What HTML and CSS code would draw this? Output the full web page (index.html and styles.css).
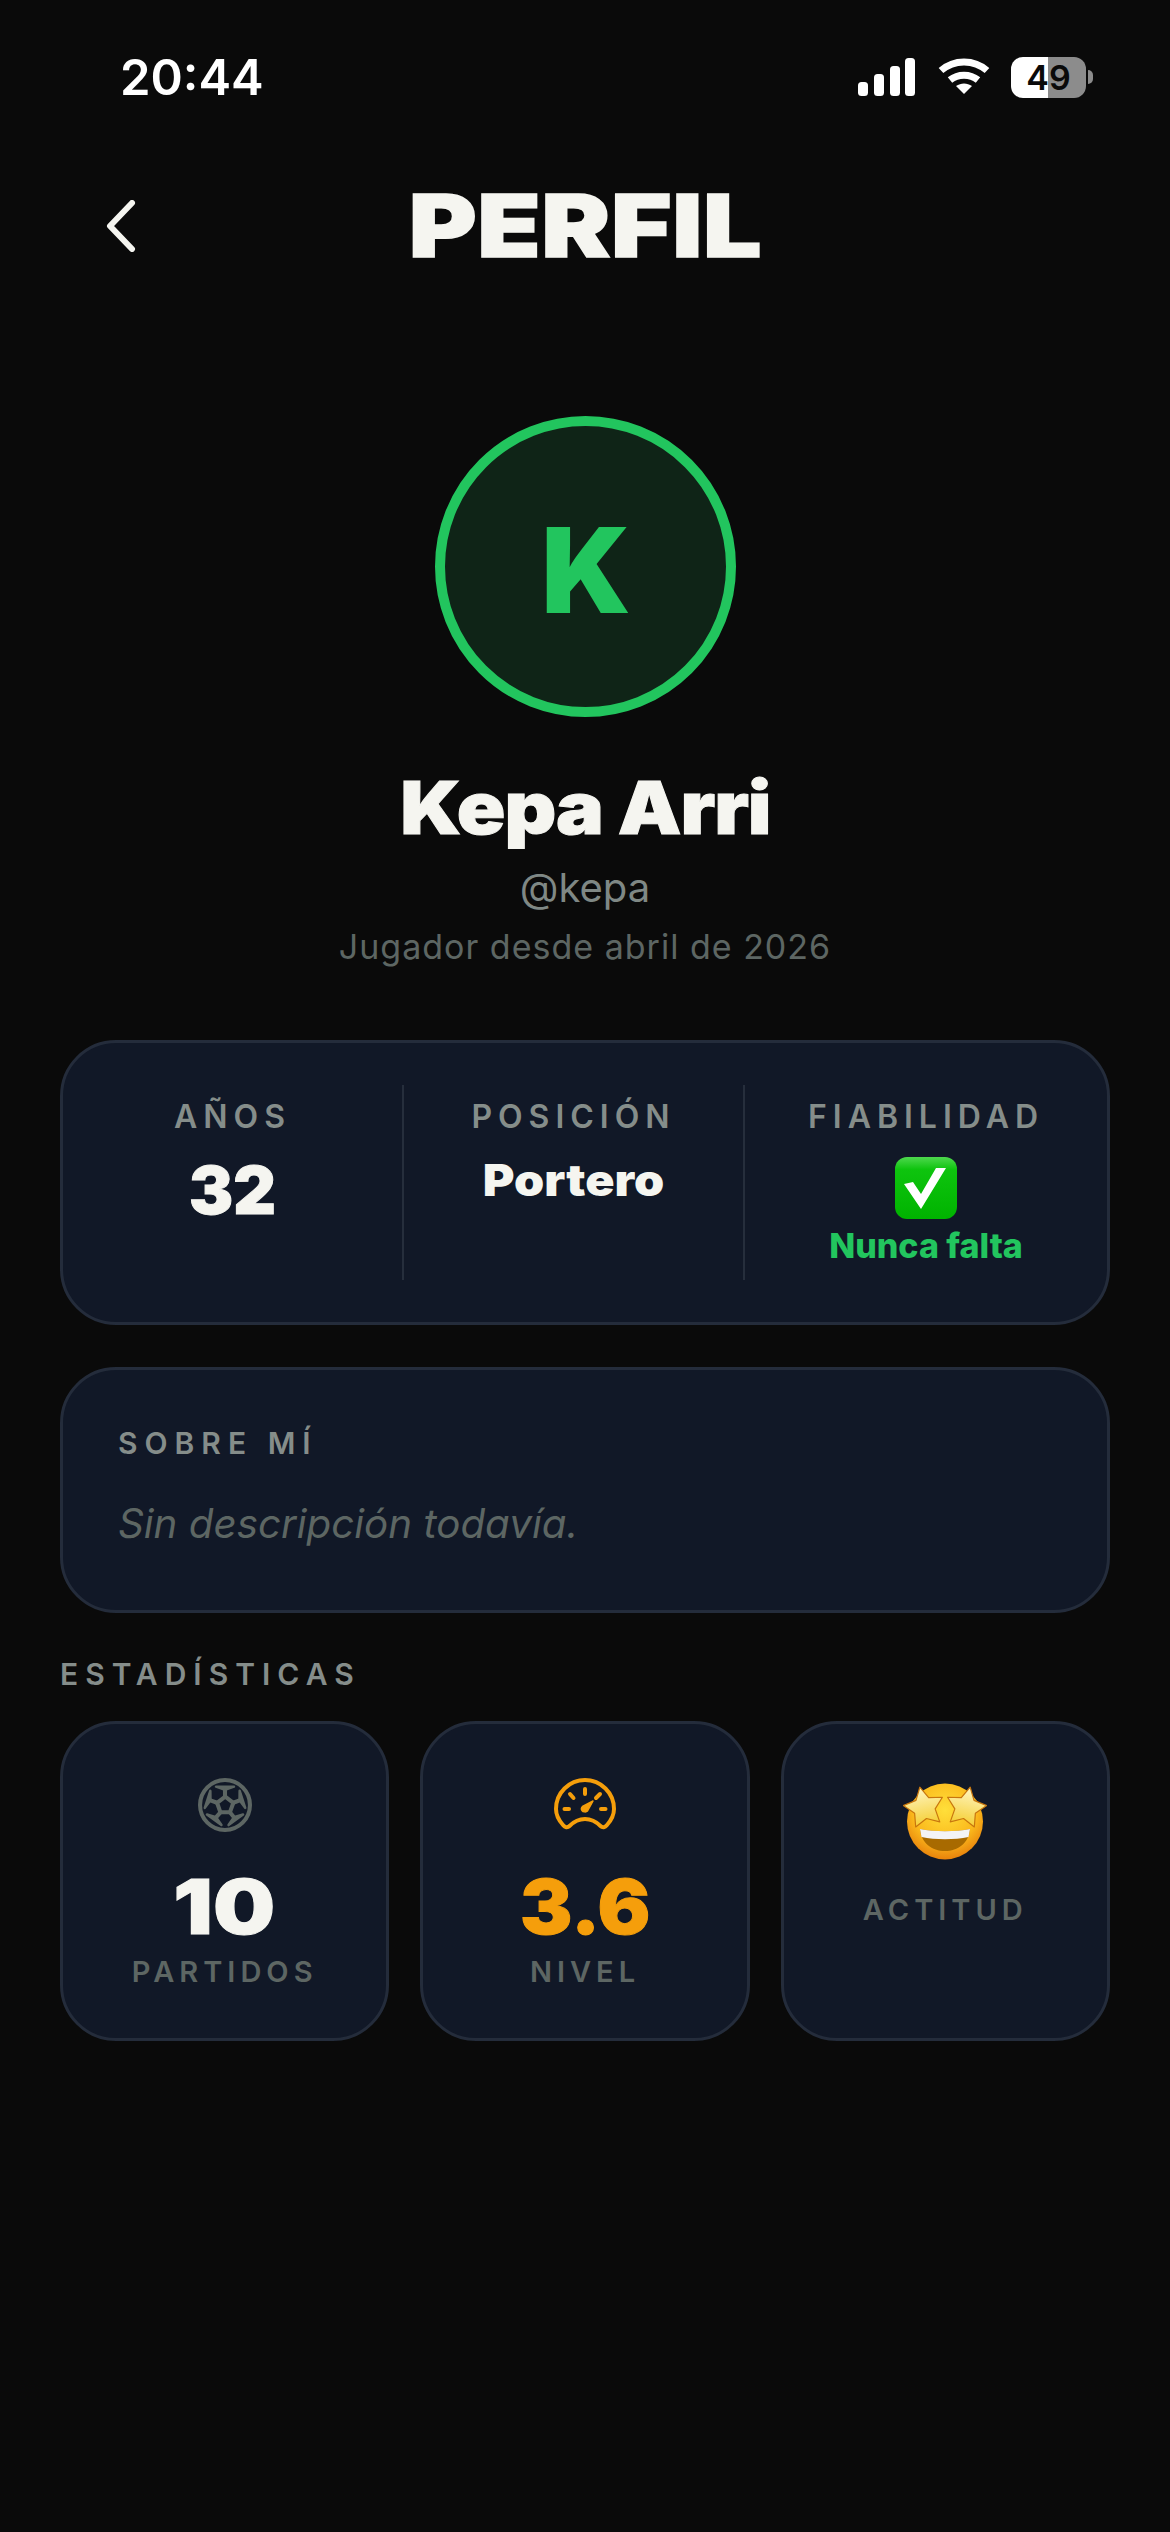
FILE: index.html

```html
<!DOCTYPE html>
<html lang="es">
<head>
  <meta charset="UTF-8">
  <meta name="viewport" content="width=device-width, initial-scale=1.0">
  <title>Perfil</title>
  <link rel="stylesheet" href="styles.css">
</head>
<body>
  <div class="status-bar">
    <span class="time">20:44</span>
    <div class="status-icons">
      <svg class="signal" width="58" height="38" viewBox="0 0 58 38" fill="#fff">
        <rect x="0" y="24" width="10" height="14" rx="3.5"/>
        <rect x="16" y="16" width="10" height="22" rx="3.5"/>
        <rect x="32" y="8" width="10" height="30" rx="3.5"/>
        <rect x="47" y="0" width="10" height="38" rx="3.5"/>
      </svg>
      <svg class="wifi" width="52" height="38" viewBox="0 0 52 38" fill="none" stroke="#fff" stroke-width="7">
        <path d="M3 12.5C16 1 36 1 49 12.5"/>
        <path d="M12 22c8-6.500 20-6.500 28 0"/>
        <path d="M18 28l8 8 8-8c-5-3.500-11-3.500-16 0z" fill="#fff" stroke="none"/>
      </svg>
      <div class="battery"><span>49</span></div>
      <span class="battery-nub"></span>
    </div>
  </div>

  <header class="top-bar">
    <svg class="back" width="30" height="52" viewBox="0 0 30 52" fill="none" stroke="#f5f5f0" stroke-width="6" stroke-linecap="round" stroke-linejoin="round">
      <path d="M26 3L4 26l22 23"/>
    </svg>
    <h1>PERFIL</h1>
  </header>

  <section class="profile">
    <div class="avatar">K</div>
    <h2 class="name">Kepa Arri</h2>
    <p class="handle">@kepa</p>
    <p class="since">Jugador desde abril de 2026</p>
  </section>

  <section class="card info-card">
    <div class="info-col">
      <span class="label">AÑOS</span>
      <span class="info-num">32</span>
    </div>
    <div class="info-col">
      <span class="label">POSICIÓN</span>
      <span class="info-text">Portero</span>
    </div>
    <div class="info-col">
      <span class="label">FIABILIDAD</span>
      <svg class="check" width="64" height="64" viewBox="0 0 64 64">
        <defs>
          <linearGradient id="checkBg" x1="0" y1="0" x2="0" y2="1">
            <stop offset="0" stop-color="#4ed84e"/>
            <stop offset="0.2" stop-color="#0ec40e"/>
            <stop offset="1" stop-color="#00b300"/>
          </linearGradient>
        </defs>
        <rect x="1" y="1" width="62" height="62" rx="12" fill="url(#checkBg)"/>
        <path d="M10 28l9-2 8 12L42 12h10L27 53z" fill="#fff"/>
      </svg>
      <span class="reliable">Nunca falta</span>
    </div>
  </section>

  <section class="card about-card">
    <h3 class="about-title">SOBRE MÍ</h3>
    <p class="about-text">Sin descripción todavía.</p>
  </section>

  <h3 class="section-title">ESTADÍSTICAS</h3>
  <section class="stats">
    <div class="card stat">
      <svg class="stat-icon" width="54" height="54" viewBox="0 0 53 53" fill="none" stroke="#5d6663" stroke-width="4" stroke-linejoin="round" stroke-linecap="round">
        <circle cx="26.500" cy="26.500" r="24.500"/>
        <path d="M26.700 18.300l8 6-3.400 9.400H22l-3.300-9.400z"/>
        <path d="M26.500 18V11.500M34.700 24.300l6.100-2.400M31.300 33.700l4 4.900M22 33.700l-4.300 4.900M18.700 24.300l-6.500-2.400"/>
        <path d="M26.500 11.500l-8.800-3h17.600zM40.800 21.900l.1-9.300 5.400 16.700zM35.300 38.600l8.900-2.700L30 46.200zM17.700 38.600l5.300 7.600-14.200-10.300zM12.200 21.900l-5.500 7.400 5.400-16.700z" fill="#5d6663" stroke-width="2.500"/>
      </svg>
      <span class="stat-num wide">10</span>
      <span class="stat-label">PARTIDOS</span>
    </div>
    <div class="card stat">
      <svg class="stat-icon" width="62" height="54" viewBox="0 0 62 54" fill="none" stroke="#f59e0b" stroke-width="4" stroke-linecap="round" stroke-linejoin="round">
        <path d="M9 47C4.500 42 2 37 2 31a29 29 0 0 1 58 0c0 6-2.500 11-7 16-2 2.500-4.500 3-6.500 1-4.500-4.500-9.500-7-15.500-7s-11 2.500-15.500 7c-2 2-4.500 1.500-6.500-1z"/>
        <path d="M31 11v5M10.500 31H15M47 31h4.500M16 16l3.500 4M46 16l-4 4"/>
        <path d="M39 23l-5.500 10c-1.500 1.500-4.500 1-5.500-.500s-.500-3 .500-4z" fill="#f59e0b" stroke-width="1.500"/>
      </svg>
      <span class="stat-num orange">3.6</span>
      <span class="stat-label">NIVEL</span>
    </div>
    <div class="card stat">
      <svg class="stat-emoji" width="84" height="77" viewBox="0 0 84 77">
        <defs>
          <radialGradient id="face" cx="0.5" cy="0.35" r="0.65">
            <stop offset="0" stop-color="#ffdf3a"/>
            <stop offset="0.65" stop-color="#fbb91c"/>
            <stop offset="1" stop-color="#e8820c"/>
          </radialGradient>
          <linearGradient id="star" x1="0" y1="0" x2="0" y2="1">
            <stop offset="0" stop-color="#fff6c4"/>
            <stop offset="1" stop-color="#f5cf35"/>
          </linearGradient>
        </defs>
        <circle cx="42" cy="38.500" r="38" fill="url(#face)"/>
        <path d="M17 46c14 3 36 3 50 0-1 14-12 22-25 22S18 60 17 46z" fill="#a86a00"/>
        <path d="M17 46c14 3 36 3 50 0l-1.500 8c-14 3-33 3-47 0z" fill="#f4f4f6"/>
        <path d="M20 3l6.500 12.100L40 17.500l-9.500 9.900L32.300 41 20 35 7.700 41l1.800-13.600L0 17.500l13.500-2.400z" fill="url(#star)" stroke="#c8760e" stroke-width="1.200" stroke-linejoin="round" transform="rotate(-12 20 24) translate(1 1)"/>
        <path d="M64 3l6.500 12.100L84 17.500l-9.500 9.900L76.300 41 64 35l-12.300 6 1.800-13.600L44 17.500l13.500-2.400z" fill="url(#star)" stroke="#c8760e" stroke-width="1.200" stroke-linejoin="round" transform="rotate(12 64 24) translate(-1 1)"/>
      </svg>
      <span class="stat-label attitude">ACTITUD</span>
    </div>
  </section>
</body>
</html>
```

FILE: styles.css

```css
body {
  margin: 0;
  background-color: #0a0a0a;
  color: #f5f5f0;
  font-family: "Inter", "Liberation Sans", sans-serif;
  height: 2532px;
  overflow: hidden;
}
.status-bar {
  display: flex;
  justify-content: space-between;
  align-items: center;
  height: 42px;
  padding: 56px 77px 0 120px;
}
.time {
  font-size: 49px;
  font-weight: 600;
  color: #fff;
}
.status-icons {
  display: flex;
  align-items: center;
}
.wifi {
  margin-left: 22px;
}
.battery {
  width: 75px;
  height: 41px;
  margin-left: 21px;
  border-radius: 12px;
  background: linear-gradient(to right, #fff 49%, #8c8c8c 49%);
  color: #0a0a0a;
  font-size: 34px;
  font-weight: 600;
  line-height: 41px;
  text-align: center;
}
.battery-nub {
  width: 5px;
  height: 14px;
  margin-left: 2px;
  border-radius: 0 7px 7px 0;
  background-color: #8c8c8c;
}
.top-bar {
  display: grid;
  grid-template-columns: 1fr auto 1fr;
  align-items: center;
  height: 100px;
  margin-top: 78px;
  padding: 0 106px;
}
.top-bar h1 {
  grid-column: 2;
  grid-row: 1;
  margin: 0;
  font-size: 87px;
  font-weight: 900;
  line-height: 100px;
  letter-spacing: 0.5px;
  -webkit-text-stroke: 1.5px #f5f5f0;
  transform: scaleX(1.19);
}
.back {
  grid-column: 1;
  grid-row: 1;
}
.profile {
  display: flex;
  flex-direction: column;
  align-items: center;
  margin-top: 140px;
}
.avatar {
  display: flex;
  align-items: center;
  justify-content: center;
  box-sizing: border-box;
  width: 301px;
  height: 301px;
  padding: 6px 0 0 2px;
  border: 10px solid #22c55e;
  border-radius: 50%;
  background-color: #0f2417;
  color: #22c55e;
  font-size: 118px;
  font-weight: 900;
}
.name {
  margin: 47px 0 0;
  font-size: 73px;
  font-weight: 900;
  line-height: 88px;
  letter-spacing: -1px;
  -webkit-text-stroke: 1px #f5f5f0;
  transform: scaleX(1.1);
}
.handle {
  margin: 12px 0 0;
  color: #7f8885;
  font-size: 40px;
  line-height: 48px;
}
.since {
  margin: 12px 0 0;
  color: #5d6663;
  font-size: 34px;
  line-height: 46px;
  letter-spacing: 1px;
}
.card {
  box-sizing: border-box;
  border: 3px solid #242c3b;
  border-radius: 56px;
  background-color: #111827;
}
.info-card {
  display: grid;
  grid-template-columns: 339px 341px 1fr;
  height: 285px;
  margin: 70px 60px 0;
  padding: 42px 0;
}
.info-col {
  display: flex;
  flex-direction: column;
  align-items: center;
  padding-top: 13px;
  border-left: 2px solid #262e3c;
}
.info-col:first-child {
  border-left: 0;
}
.label {
  color: #858d8a;
  font-size: 32px;
  font-weight: 600;
  line-height: 38px;
  letter-spacing: 6px;
}
.info-num {
  margin-top: 18px;
  font-size: 66px;
  font-weight: 900;
  line-height: 72px;
  -webkit-text-stroke: 1px #f5f5f0;
}
.info-text {
  margin-top: 18px;
  font-size: 44px;
  font-weight: 900;
  line-height: 52px;
  transform: scaleX(1.1);
}
.check {
  margin-top: 20px;
}
.reliable {
  margin-top: 6px;
  color: #22c55e;
  font-size: 34px;
  font-weight: 800;
  line-height: 40px;
}
.about-card {
  height: 246px;
  margin: 42px 60px 0;
  padding: 55px 55px 0;
}
.about-title {
  margin: 0;
  color: #858d8a;
  font-size: 30px;
  font-weight: 600;
  line-height: 36px;
  letter-spacing: 7px;
}
.about-text {
  margin: 39px 0 0;
  color: #5d6663;
  font-size: 40.3px;
  font-style: italic;
  line-height: 48px;
}
.section-title {
  margin: 43px 60px 0;
  color: #858d8a;
  font-size: 30px;
  font-weight: 600;
  line-height: 36px;
  letter-spacing: 7px;
}
.stats {
  display: grid;
  grid-template-columns: repeat(3, 1fr);
  gap: 31px;
  margin: 29px 60px 0;
}
.stat {
  display: flex;
  flex-direction: column;
  align-items: center;
  height: 320px;
  padding-top: 54px;
}
.stat-icon {
  height: 54px;
}
.stat-emoji {
  margin-top: 5px;
}
.stat-num {
  margin-top: 30px;
  font-size: 76px;
  font-weight: 900;
  line-height: 88px;
  -webkit-text-stroke: 1px currentColor;
  transform: scaleX(1.03);
}
.wide {
  transform: scaleX(1.15);
}
.orange {
  color: #f59e0b;
}
.stat-label {
  margin-top: 4px;
  color: #5d6663;
  font-size: 29px;
  font-weight: 600;
  line-height: 36px;
  letter-spacing: 5px;
}
.attitude {
  margin-top: 32px;
}
```
